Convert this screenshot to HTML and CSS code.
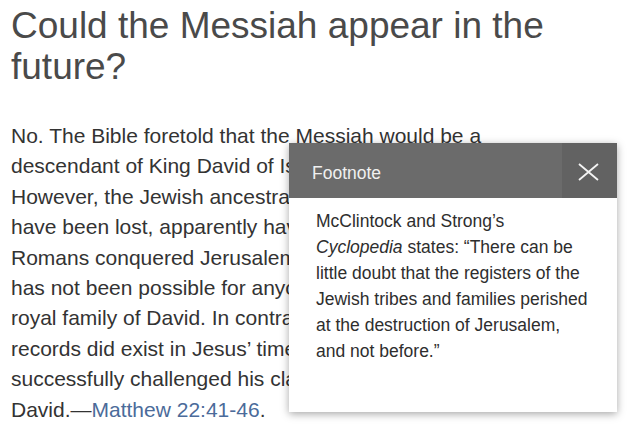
FILE: index.html
```html
<!DOCTYPE html>
<html>
<head>
<meta charset="utf-8">
<link rel="stylesheet" href="styles.css">
</head>
<body>
<main class="page">
  <h1 class="title">Could the Messiah appear in the future?</h1>
  <p class="body">
    <span class="line">No. The Bible foretold that the Messiah would be a</span>
    <span class="line">descendant of King David of Israel. (Psalm 132:11)</span>
    <span class="line">However, the Jewish ancestral records or genealogies</span>
    <span class="line">have been lost, apparently having been destroyed</span>
    <span class="line">Romans conquered Jerusalem in 70 C.E. Since then, it</span>
    <span class="line">has not been possible for anyone to prove that he is</span>
    <span class="line">royal family of David. In contrast, those genealogical</span>
    <span class="line">records did exist in Jesus’ time, and none of his</span>
    <span class="line">successfully challenged his claim to be a descendant</span>
    <span class="line">David.—<a class="ref" href="#">Matthew 22:41-46</a>.</span>
  </p>
</main>
<aside class="footnote">
  <header class="fn-head">
    <span class="fn-title">Footnote</span>
    <span class="fn-close">
      <svg width="21" height="18" viewBox="0 0 21 18"><path d="M1 1 L20 17 M20 1 L1 17" stroke="#f4f4f4" stroke-width="1.8" fill="none"/></svg>
    </span>
  </header>
  <div class="fn-body">McClintock and Strong’s <i>Cyclopedia</i> states: “There can be little doubt that the registers of the Jewish tribes and families perished at the destruction of Jerusalem, and not before.”</div>
</aside>
</body>
</html>
```
FILE: styles.css
```css
html, body {
  margin: 0;
  padding: 0;
  background: #fff;
}
body {
  font-family: "Liberation Sans", Arial, sans-serif;
  width: 638px;
  height: 444px;
  overflow: hidden;
  position: relative;
}
.page {
  padding: 5px 10px 0 11px;
}
.title {
  margin: 0;
  font-weight: normal;
  font-size: 37px;
  line-height: 41px;
  color: #4a4a4a;
  width: 600px;
}
.body {
  margin: 34px 0 0 0;
  max-width: 595px;
  overflow: hidden;
  font-size: 21px;
  line-height: 30.4px;
  color: #333;
}
.line {
  display: block;
  white-space: nowrap;
}
.ref {
  color: #4b6b9a;
  text-decoration: none;
}
.footnote {
  position: absolute;
  left: 289px;
  top: 143px;
  width: 328px;
  height: 269px;
  background: #fff;
  box-shadow: 0 2px 8px rgba(0,0,0,0.35);
  display: flex;
  flex-direction: column;
}
.fn-head {
  height: 55px;
  flex: none;
  background: #6b6b6b;
  display: flex;
  align-items: center;
  justify-content: space-between;
}
.fn-title {
  padding: 6px 0 0 23px;
  color: #f0f0f0;
  font-size: 17.5px;
}
.fn-close {
  width: 55px;
  height: 55px;
  box-sizing: border-box;
  padding: 2px 3px 0 0;
  background: #626262;
  display: flex;
  align-items: center;
  justify-content: center;
}
.fn-close svg { display: block; }
.fn-body {
  padding: 10px 25px 0 27px;
  font-size: 17.5px;
  line-height: 26px;
  color: #2e2e2e;
}
```
